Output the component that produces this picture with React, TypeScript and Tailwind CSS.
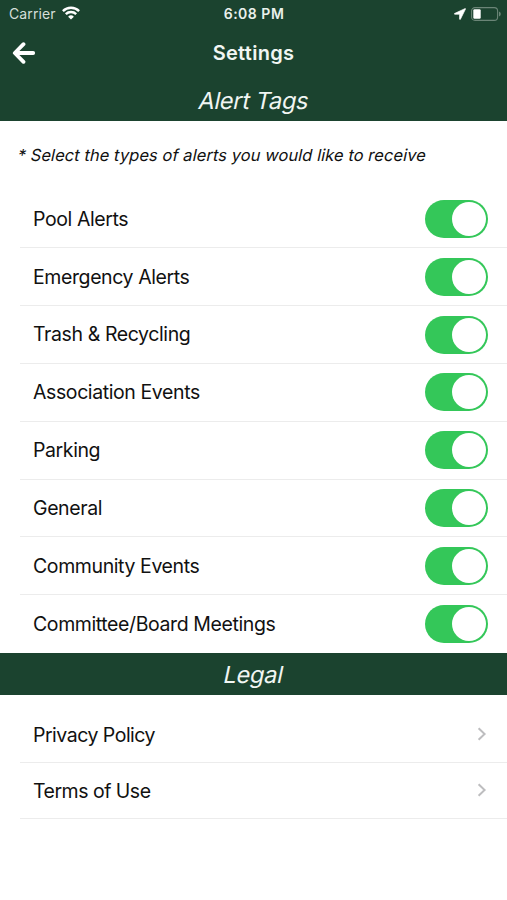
import { useState } from 'react';

const TAGS = [
  'Pool Alerts',
  'Emergency Alerts',
  'Trash & Recycling',
  'Association Events',
  'Parking',
  'General',
  'Community Events',
  'Committee/Board Meetings',
];

const LEGAL = ['Privacy Policy', 'Terms of Use'];

function StatusBar() {
  return (
    <div className="grid grid-cols-3 items-center h-7 pl-[9px] pr-[6px] text-[14px] leading-none">
      <div className="flex items-center gap-[6px] text-[#d5dfd9]">
        <span className="tracking-[0.1px]">Carrier</span>
        <svg width="18" height="14" viewBox="0 0 18 14" fill="none" stroke="#fff" strokeWidth="2.4" className="-mt-0.5">
          <path d="M0.9 5.1a11.5 11.5 0 0 1 16.2 0" />
          <path d="M3.8 8.2a7.4 7.4 0 0 1 10.4 0" />
          <path d="M9 13.6 6.1 10.7a4.1 4.1 0 0 1 5.8 0z" fill="#fff" stroke="none" />
        </svg>
      </div>
      <span className="text-center font-semibold tracking-[0.5px] text-[#eaf1ec] -ml-0.5">6:08 PM</span>
      <div className="flex items-center justify-end gap-[5px] -mt-px">
        <svg width="12" height="12" viewBox="0 0 12 12" fill="#fff" stroke="#fff" strokeWidth="0.7" strokeLinejoin="round">
          <path d="M11.3 0.5 0.5 5.5l0.1 0.7h5v5l0.7 0.2L11.6 0.8z" />
        </svg>
        <svg width="30" height="14" viewBox="0 0 30 14" fill="none">
          <rect x="0.6" y="0.6" width="26" height="12.8" rx="3.4" stroke="#6b8577" strokeWidth="1.1" />
          <rect x="2.3" y="2.3" width="7.4" height="9.4" rx="1.2" fill="#fff" />
          <path d="M28 4.6q1.8 0.7 1.8 2.4T28 9.4z" fill="#6b8577" />
        </svg>
      </div>
    </div>
  );
}

function Toggle({ on, onClick, label }: { on: boolean; onClick: () => void; label: string }) {
  return (
    <button
      role="switch"
      aria-checked={on}
      aria-label={label}
      onClick={onClick}
      className={`flex items-center w-[63px] h-[38px] rounded-full px-[2px] ${
        on ? 'bg-[#34c759] justify-end' : 'bg-[#e9e9ea] justify-start'
      }`}
    >
      <span className="block size-[34px] rounded-full bg-white" />
    </button>
  );
}

export default function App() {
  const [off, setOff] = useState<string[]>([]);

  const toggle = (tag: string) =>
    setOff(off.includes(tag) ? off.filter((t) => t !== tag) : [...off, tag]);

  return (
    <div className="w-full h-[900px] bg-white text-[#111] font-['Inter',sans-serif] overflow-hidden">
      <header className="h-[121px] bg-[#1b432f] text-[#f1f6f3]">
        <StatusBar />
        <div className="grid grid-cols-3 items-center h-[49px] px-3">
          <button aria-label="Back" className="w-6">
            <svg width="24" height="22" viewBox="0 0 24 22" fill="none" stroke="#fff" strokeWidth="3.8" strokeLinecap="round" strokeLinejoin="round">
              <path d="M11.5 2.2 2.8 11l8.7 8.8M3.4 11h17.8" />
            </svg>
          </button>
          <h1 className="text-center text-[20px] leading-6 font-semibold tracking-[0.3px]">Settings</h1>
        </div>
        {/* skewed upright letters keep the two-storey "a" */}
        <h2 className="pt-px text-center text-[23.5px] leading-[46px] tracking-[-0.3px]">
          <span className="inline-block -skew-x-12">Alert Tags</span>
        </h2>
      </header>

      <p className="h-[69.6px] pt-[22px] pl-[18px] text-[16.5px] leading-6 tracking-[0.06px] whitespace-nowrap">
        <span className="inline-block -skew-x-12">* Select the types of alerts you would like to receive</span>
      </p>

      <ul>
        {TAGS.map((tag) => (
          <li key={tag} className="ml-5 h-[57.8px] pl-[13px] pr-[19px] flex items-center justify-between border-b border-[#ececec] last:border-b-0">
            <span className="text-[19.5px] tracking-[-0.4px] pt-px">{tag}</span>
            <Toggle on={!off.includes(tag)} onClick={() => toggle(tag)} label={tag} />
          </li>
        ))}
      </ul>

      <h2 className="h-[42px] bg-[#1b432f] text-[#f1f6f3] text-center text-[23.5px] leading-[43px] tracking-[-0.2px]">
        <span className="inline-block -skew-x-12">Legal</span>
      </h2>

      <ul className="pt-3">
        {LEGAL.map((item) => (
          <li key={item} className="ml-5 h-14 pl-[13px] pr-5 flex items-center justify-between border-b border-[#ececec]">
            <span className="text-[19.5px] tracking-[-0.5px] pt-0.5">{item}</span>
            <svg width="10" height="14" viewBox="0 0 10 14" fill="none" stroke="#bdbdbf" strokeWidth="2">
              <path d="M1.6 1.2 7.6 7l-6 5.8" />
            </svg>
          </li>
        ))}
      </ul>
    </div>
  );
}
